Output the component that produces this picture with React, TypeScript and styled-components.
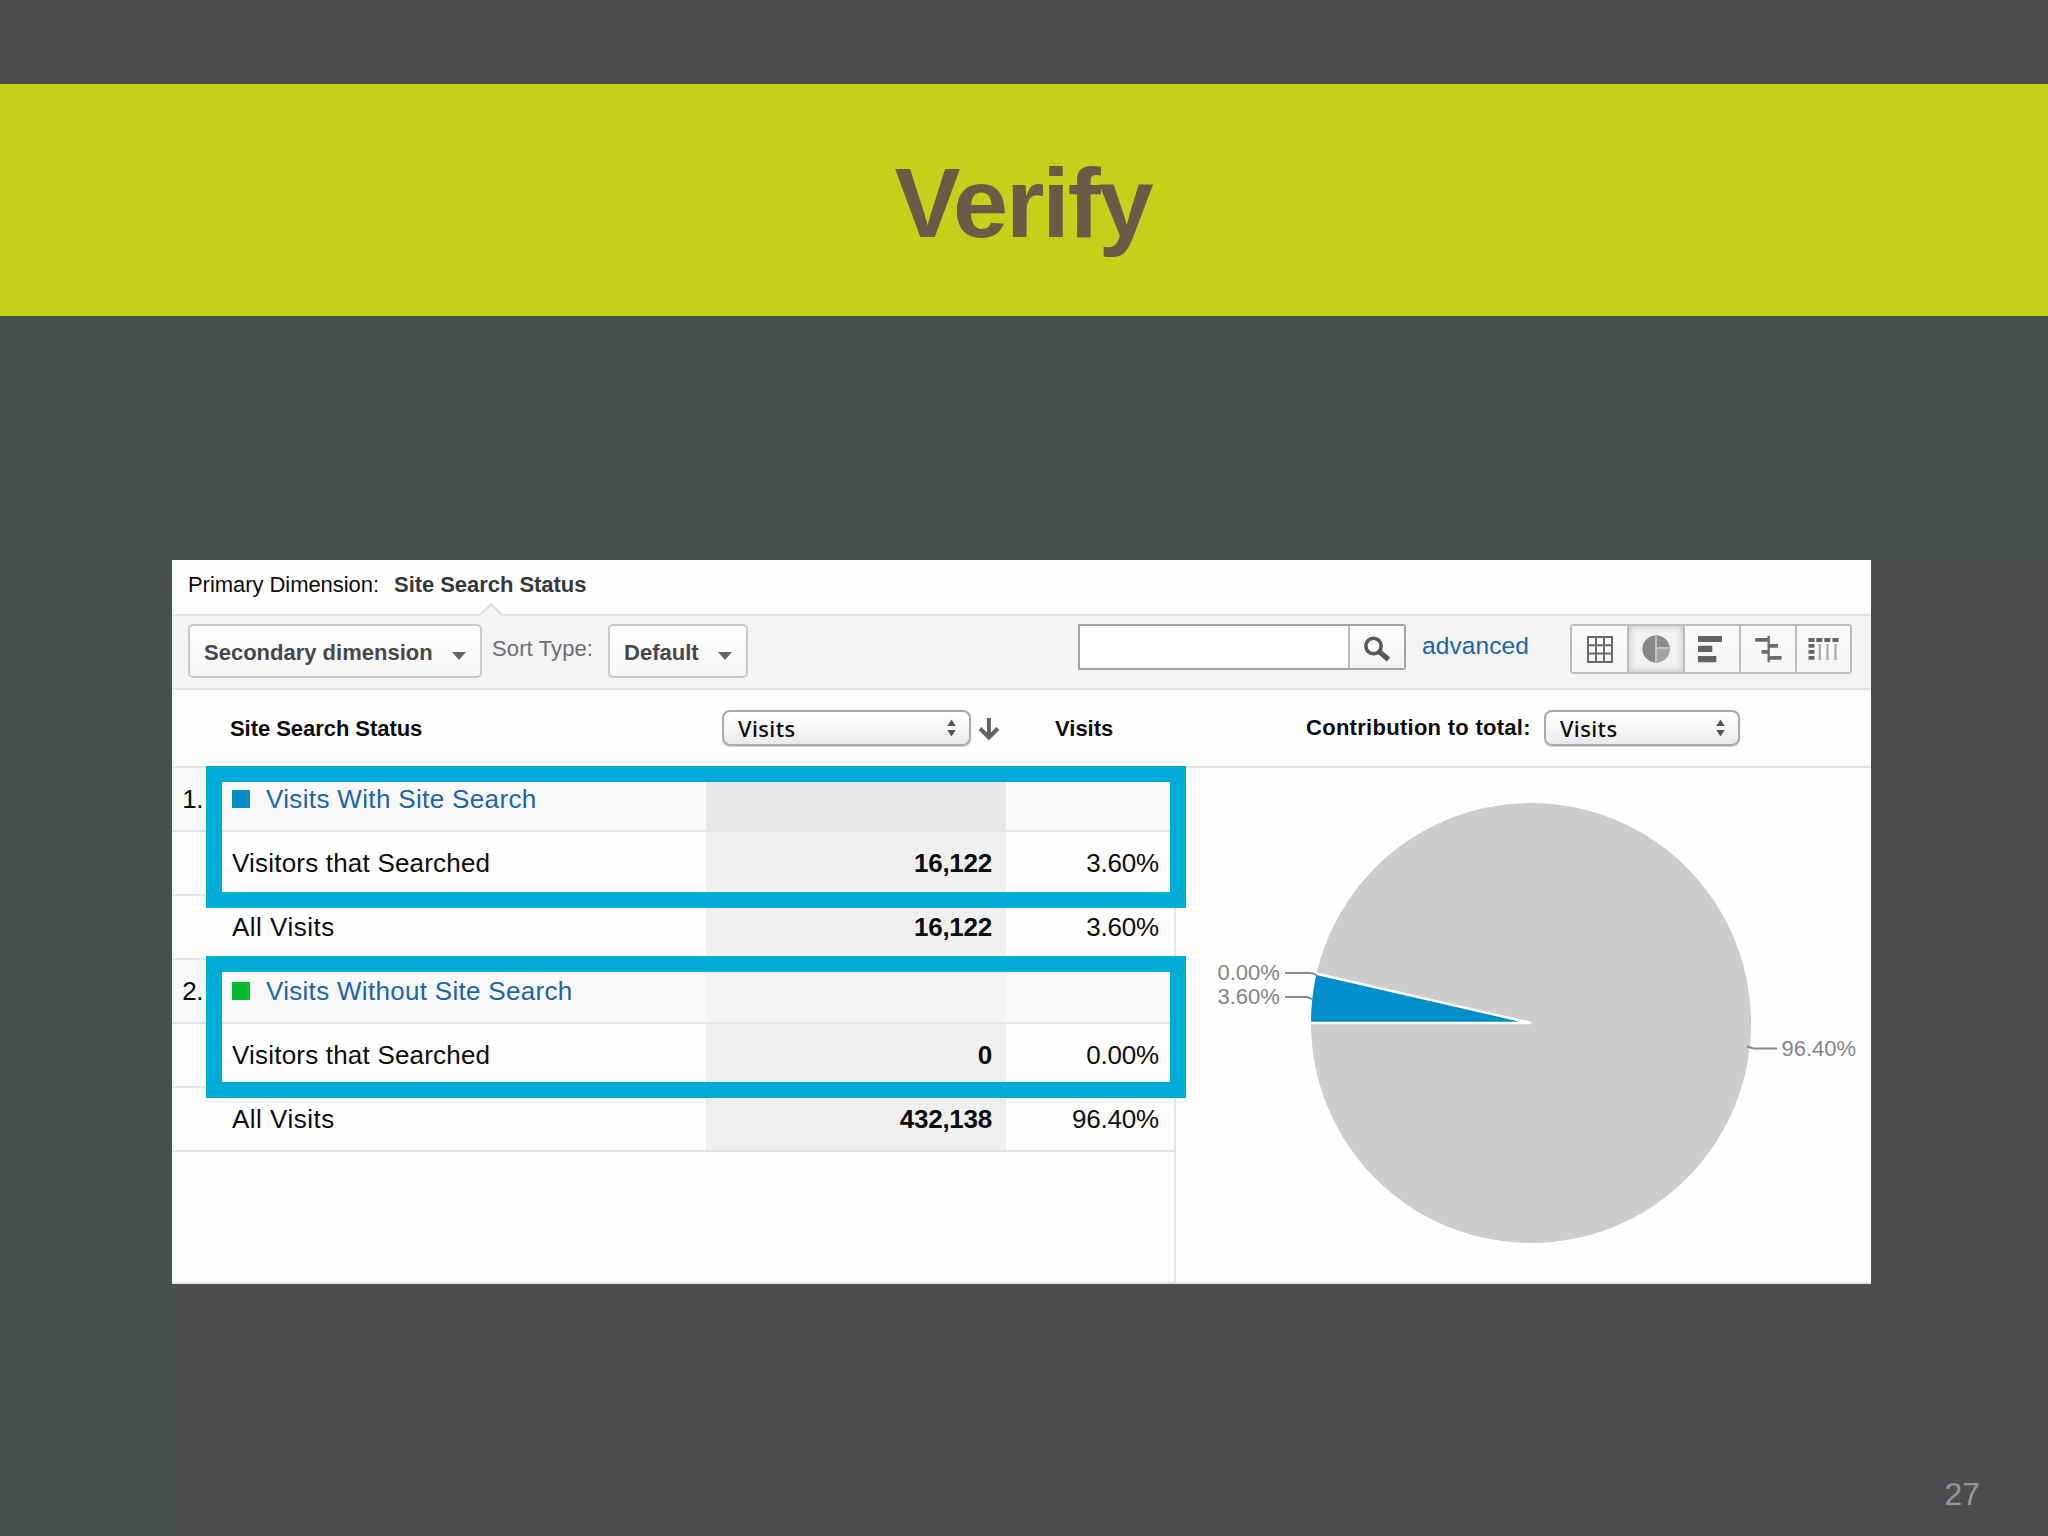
import React from "react";
import styled, { createGlobalStyle } from "styled-components";

const GlobalStyle = createGlobalStyle`
  html, body { margin: 0; padding: 0; background: #4d4d4f; }
  * { box-sizing: border-box; }
`;

const LINE = "#e4e3e6";
const INK = "#0c0c0e";
const LINK = "#1d64a8";

const Slide = styled.div`
  width: 2048px;
  height: 1536px;
  overflow: hidden;
  display: flex;
  flex-direction: column;
  background:
    linear-gradient(#4a4e4f, #4a4e4f) 0 316px / 2048px 244px no-repeat,
    linear-gradient(#4a4e4f, #4a4e4f) 0 560px / 172px 976px no-repeat,
    #4d4d4f;
  font-family: "Liberation Sans", Arial, sans-serif;
  color: ${INK};
  white-space: nowrap;
`;

const TopStrip = styled.div`
  height: 84px;
  flex: none;
  background: #4d4d4d;
`;

const TitleBand = styled.header`
  height: 232px;
  flex: none;
  display: flex;
  align-items: center;
  justify-content: center;
  background: #c3d11b;
`;

const Title = styled.h1`
  margin: 0;
  padding: 5px 2px 0 0;
  font-size: 99px;
  line-height: 120px;
  letter-spacing: -2.1px;
  color: #695c46;
`;

const Body = styled.main`
  flex: 1;
  padding: 244px 0 0 172px;
`;

const Report = styled.section`
  width: 1699px;
  height: 724px;
  display: flex;
  flex-direction: column;
  background: #fefefe;
  box-shadow: inset 0 -2px 0 #e2e2e3;
`;

const DimensionBar = styled.div`
  height: 56px;
  flex: none;
  display: flex;
  align-items: center;
  gap: 15px;
  padding: 0 0 5px 16px;
  border-bottom: 2px solid ${LINE};
  font-size: 22px;
  letter-spacing: -0.05px;
`;

const ActiveDimension = styled.strong`
  position: relative;
  color: #37383b;
`;

const Notch = styled.svg`
  position: absolute;
  left: 86px;
  top: 31px;
  width: 22px;
  height: 14px;
`;

const Toolbar = styled.div`
  height: 74px;
  flex: none;
  display: flex;
  align-items: flex-start;
  padding: 8px 19px 0 16px;
  background: #f4f3f5;
  border-bottom: 2px solid ${LINE};
`;

const MenuButton = styled.button<{ $width: number }>`
  width: ${(p) => p.$width}px;
  height: 54px;
  display: flex;
  align-items: center;
  justify-content: space-between;
  padding: 4px 14px 0 14px;
  border: 2px solid #cbcacc;
  border-radius: 5px;
  background: linear-gradient(#ffffff, #f6f5f7);
  font: bold 22px "Liberation Sans", Arial, sans-serif;
  color: #47474a;
`;

const Caret = styled.span`
  margin-top: 6px;
  border: 7.5px solid transparent;
  border-top: 8px solid #666567;
  border-bottom: 0;
`;

const SortLabel = styled.span`
  padding: 12px 15px 0 10px;
  font-size: 22px;
  line-height: 26px;
  letter-spacing: 0.12px;
  color: #6d6d70;
`;

const SearchBox = styled.div`
  display: flex;
  width: 328px;
  height: 46px;
  margin-left: auto;
  border: 2px solid #a3a2a5;
  border-radius: 1px 3px 3px 1px;
`;

const SearchInput = styled.input`
  width: 268px;
  min-width: 0;
  padding: 0;
  border: 0;
  background: #fff;
`;

const SearchButton = styled.button`
  flex: 1;
  padding: 3px 0 0;
  display: flex;
  align-items: center;
  justify-content: center;
  border: 0;
  border-left: 2px solid #bcbbbe;
  background: linear-gradient(#fdfdfd, #f4f3f6);
`;

const AdvancedLink = styled.a`
  width: 164px;
  padding: 7px 0 0 16px;
  font-size: 24.5px;
  line-height: 29px;
  letter-spacing: 0.1px;
  color: ${LINK};
`;

const ViewSwitch = styled.div`
  width: 282px;
  height: 50px;
  display: grid;
  grid-template-columns: 57px 56px 56px 56px 1fr;
  border: 2px solid #bdbcbf;
  border-radius: 4px;
`;

const ViewButton = styled.button<{ $active?: boolean }>`
  display: flex;
  align-items: center;
  justify-content: center;
  padding: 0;
  border: 0;
  border-right: 2px solid #bdbcbf;
  background: ${(p) => (p.$active ? "#f1f0f2" : "linear-gradient(#fbfbfc, #f5f4f6)")};
  box-shadow: ${(p) => (p.$active ? "inset 0 0 7px rgba(0,0,0,.22)" : "none")};
  &:last-child { border-right: 0; }
`;

const TableHead = styled.div`
  height: 78px;
  flex: none;
  display: grid;
  grid-template-columns: 550px 278px 306px 1fr;
  align-items: center;
  border-bottom: 2px solid ${LINE};
  font-size: 22px;
  font-weight: bold;
`;

const NameHead = styled.span`
  padding: 1px 0 0 58px;
  letter-spacing: -0.05px;
`;

const SortHead = styled.div`
  display: flex;
  align-items: center;
  gap: 7px;
`;

const ValueHead = styled.span`
  padding: 1px 0 0 55px;
`;

const ContributionHead = styled.div`
  display: flex;
  align-items: center;
  gap: 13px;
  letter-spacing: 0.28px;
`;

const SelectBox = styled.div<{ $width: number }>`
  width: ${(p) => p.$width}px;
  height: 36px;
  display: flex;
  align-items: center;
  justify-content: space-between;
  padding: 0 13px 0 14px;
  border: 2px solid #a9a8ab;
  border-radius: 8px;
  background: linear-gradient(#ffffff 0%, #f8f7f9 45%, #e9e8ea 100%);
  box-shadow: 0 1px 1px rgba(0, 0, 0, 0.18);
  font-family: "Noto Sans", "Open Sans", sans-serif;
  font-size: 22px;
  font-weight: 500;
  letter-spacing: 0.4px;
  line-height: 30px;
`;

const Content = styled.div`
  flex: 1;
  display: flex;
`;

const Table = styled.div`
  position: relative;
  width: 1004px;
  flex: none;
  border-right: 2px solid ${LINE};
`;

const Row = styled.div<{ $group?: boolean }>`
  height: 64px;
  display: grid;
  grid-template-columns: 32px 502px 300px 168px;
  background: ${(p) => (p.$group ? "#f8f8f9" : "transparent")};
  font-size: 26px;
`;

const Cell = styled.div`
  display: flex;
  align-items: center;
  border-bottom: 2px solid ${LINE};
`;

const IndexCell = styled(Cell)`
  justify-content: flex-end;
  padding-right: 1px;
  letter-spacing: -0.5px;
`;

const NameCell = styled(Cell)<{ $spacing: number }>`
  padding-left: 28px;
  gap: 16px;
  letter-spacing: ${(p) => p.$spacing}px;
`;

const CountCell = styled(Cell)<{ $tone: string; $rule: string }>`
  justify-content: flex-end;
  padding-right: 14px;
  background: ${(p) => p.$tone};
  border-bottom-color: ${(p) => p.$rule};
  font-weight: bold;
  letter-spacing: -0.25px;
`;

const ShareCell = styled(Cell)`
  justify-content: flex-end;
  padding-right: 15px;
  letter-spacing: -0.2px;
`;

const Swatch = styled.span<{ $color: string }>`
  width: 18px;
  height: 18px;
  background: ${(p) => p.$color};
`;

const RowLink = styled.a`
  color: ${LINK};
`;

const Highlight = styled.div<{ $top: number }>`
  position: absolute;
  left: 34px;
  top: ${(p) => p.$top}px;
  width: 980px;
  height: 142px;
  border: 16px solid #00abd8;
`;

const ChartPanel = styled.div`
  flex: 1;
  overflow: hidden;
`;

const Chart = styled.svg`
  display: block;
  width: 695px;
  height: 513px;
  font-family: "Liberation Sans", Arial, sans-serif;
  font-size: 22px;
`;

const PageNumber = styled.footer`
  padding: 0 68px 24px 0;
  text-align: right;
  font-size: 32px;
  line-height: 36px;
  color: #969698;
`;

function SelectArrows() {
  return (
    <svg width="9" height="18" viewBox="0 0 9 18" fill="#555457">
      <path d="M4.5 0.5 8.7 7H.3zM4.5 17.5.3 11h8.4z" />
    </svg>
  );
}

function GridIcon() {
  return (
    <svg width="26" height="27" viewBox="0 0 26 27" fill="none" stroke="#6a696c" strokeWidth="2">
      <path d="M1 1h24v25H1zM9 1v25M17 1v25M1 9.3h24M1 17.6h24" />
    </svg>
  );
}

function PieIcon() {
  return (
    <svg width="28" height="28" viewBox="0 0 28 28">
      <circle cx="14" cy="14" r="13.6" fill="#868588" />
      <path d="M14 13.5V.4A13.6 13.6 0 0 1 27.6 13.5z" fill="#8d8c8f" />
      <path d="M14 14h13.6A13.6 13.6 0 0 1 14 27.6z" fill="#a2a1a4" />
      <path d="M14 1v26M14 13h13" stroke="#c3c2c5" strokeWidth="2" />
    </svg>
  );
}

function BarsIcon() {
  return (
    <svg width="30" height="28" viewBox="0 0 30 28" fill="#636265">
      <path d="M1 1h24v6H1zM1 10.7h14.300v6.200H1zM1 21h18.300v6.300H1z" />
    </svg>
  );
}

function CompareIcon() {
  return (
    <svg width="27" height="28" viewBox="0 0 27 28" fill="#6a696c">
      <path d="M12.500.700h2.300v26.600h-2.300zM.200 3h13v3.700H.200zM14 9h9v3.700h-9zM6.500 15h7v3.700h-7zM14 21h12.500v3.700H14z" />
    </svg>
  );
}

function PivotIcon() {
  return (
    <svg width="31" height="24" viewBox="0 0 31 24">
      <path
        fill="#636265"
        d="M.5 1h6v4h-6zM8.300 1h6v4h-6zM16.300 1h6v4h-6zM24.500 1h6v4h-6zM.5 7h6v3.700h-6zM.5 13h6v3.700h-6zM.5 19h6v3.700h-6z"
      />
      <path d="M11.800 7v16M19.500 7v16M27.500 7v16" stroke="#aeadb0" strokeWidth="2.400" />
    </svg>
  );
}

function SearchIcon() {
  return (
    <svg width="28" height="26" viewBox="0 0 28 26" fill="none" stroke="#59585b">
      <circle cx="10.500" cy="10" r="7.700" strokeWidth="3.600" />
      <path d="M16 15.500l9.500 8" strokeWidth="5.200" />
    </svg>
  );
}

function SortArrow() {
  return (
    <svg width="22" height="26" viewBox="0 0 22 26" fill="none" stroke="#626164" strokeWidth="4">
      <path d="M11 3v19M2 13.500l9 9 9-9" />
    </svg>
  );
}

const RADIUS = 220;
const CX = 355;
const CY = 255;
const SLICE = 0.036 * 2 * Math.PI;

function PieChart() {
  const x = CX - RADIUS * Math.cos(SLICE);
  const y = CY - RADIUS * Math.sin(SLICE);
  return (
    <Chart viewBox="0 0 695 513">
      <circle cx={CX} cy={CY} r={RADIUS} fill="#cecccf" />
      <path
        d={`M${CX} ${CY}L${CX - RADIUS} ${CY}A${RADIUS} ${RADIUS} 0 0 1 ${x} ${y}Z`}
        fill="#008ecb"
      />
      <path
        d={`M${CX - RADIUS} ${CY}H${CX}L${x} ${y}`}
        fill="none"
        stroke="#fff"
        strokeWidth="2.500"
      />
      <path
        d="M109 205h25q3 0 7 2.500M109 229h22l5 2M571 278.500l7 2h23"
        fill="none"
        stroke="#8b8a8d"
        strokeWidth="2"
      />
      <g fill="#858487">
        <text x="41.500" y="212">0.00%</text>
        <text x="41.500" y="236">3.60%</text>
        <text x="605.500" y="288">96.40%</text>
      </g>
    </Chart>
  );
}

interface RowData {
  index?: string;
  name: string;
  swatch?: string;
  spacing: number;
  count?: string;
  share?: string;
  tone: string;
  rule: string;
}

const rows: RowData[] = [
  { index: "1.", name: "Visits With Site Search", swatch: "#058dc7", spacing: 0.35, tone: "#e9e9ea", rule: "#e9e8ea" },
  { name: "Visitors that Searched", spacing: 0.2, count: "16,122", share: "3.60%", tone: "#efeff0", rule: "#e6e6e8" },
  { name: "All Visits", spacing: 0.5, count: "16,122", share: "3.60%", tone: "#efeff0", rule: "#e6e6e8" },
  { index: "2.", name: "Visits Without Site Search", swatch: "#05bb34", spacing: 0.3, tone: "#f3f2f4", rule: "#e8e6e9" },
  { name: "Visitors that Searched", spacing: 0.2, count: "0", share: "0.00%", tone: "#f0eef1", rule: "#e6e6e8" },
  { name: "All Visits", spacing: 0.5, count: "432,138", share: "96.40%", tone: "#efeff0", rule: "#e2e2e4" },
];

export default function App() {
  return (
    <Slide>
      <GlobalStyle />
      <TopStrip />
      <TitleBand>
        <Title>Verify</Title>
      </TitleBand>
      <Body>
        <Report>
          <DimensionBar>
            <span>Primary Dimension:</span>
            <ActiveDimension>
              Site Search Status
              <Notch viewBox="0 0 22 14">
                <path d="M0 14V12L11 1.500 22 12V14z" fill="#f6f5f7" />
                <path d="M0 12 11 1.500 22 12" fill="none" stroke="#dddcdf" strokeWidth="2" />
              </Notch>
            </ActiveDimension>
          </DimensionBar>
          <Toolbar>
            <MenuButton $width={294}>
              Secondary dimension <Caret />
            </MenuButton>
            <SortLabel>Sort Type:</SortLabel>
            <MenuButton $width={140}>
              Default <Caret />
            </MenuButton>
            <SearchBox>
              <SearchInput aria-label="Search" />
              <SearchButton aria-label="Search">
                <SearchIcon />
              </SearchButton>
            </SearchBox>
            <AdvancedLink>advanced</AdvancedLink>
            <ViewSwitch>
              <ViewButton><GridIcon /></ViewButton>
              <ViewButton $active><PieIcon /></ViewButton>
              <ViewButton><BarsIcon /></ViewButton>
              <ViewButton><CompareIcon /></ViewButton>
              <ViewButton><PivotIcon /></ViewButton>
            </ViewSwitch>
          </Toolbar>
          <TableHead>
            <NameHead>Site Search Status</NameHead>
            <SortHead>
              <SelectBox $width={251}>
                Visits <SelectArrows />
              </SelectBox>
              <SortArrow />
            </SortHead>
            <ValueHead>Visits</ValueHead>
            <ContributionHead>
              Contribution to total:
              <SelectBox $width={196}>
                Visits <SelectArrows />
              </SelectBox>
            </ContributionHead>
          </TableHead>
          <Content>
            <Table>
              {rows.map((row, i) => (
                <Row key={i} $group={!!row.swatch}>
                  <IndexCell>{row.index}</IndexCell>
                  <NameCell $spacing={row.spacing}>
                    {row.swatch ? (
                      <>
                        <Swatch $color={row.swatch} />
                        <RowLink>{row.name}</RowLink>
                      </>
                    ) : (
                      row.name
                    )}
                  </NameCell>
                  <CountCell $tone={row.tone} $rule={row.rule}>{row.count}</CountCell>
                  <ShareCell>{row.share}</ShareCell>
                </Row>
              ))}
              <Highlight $top={-2} />
              <Highlight $top={188} />
            </Table>
            <ChartPanel>
              <PieChart />
            </ChartPanel>
          </Content>
        </Report>
      </Body>
      <PageNumber>27</PageNumber>
    </Slide>
  );
}
